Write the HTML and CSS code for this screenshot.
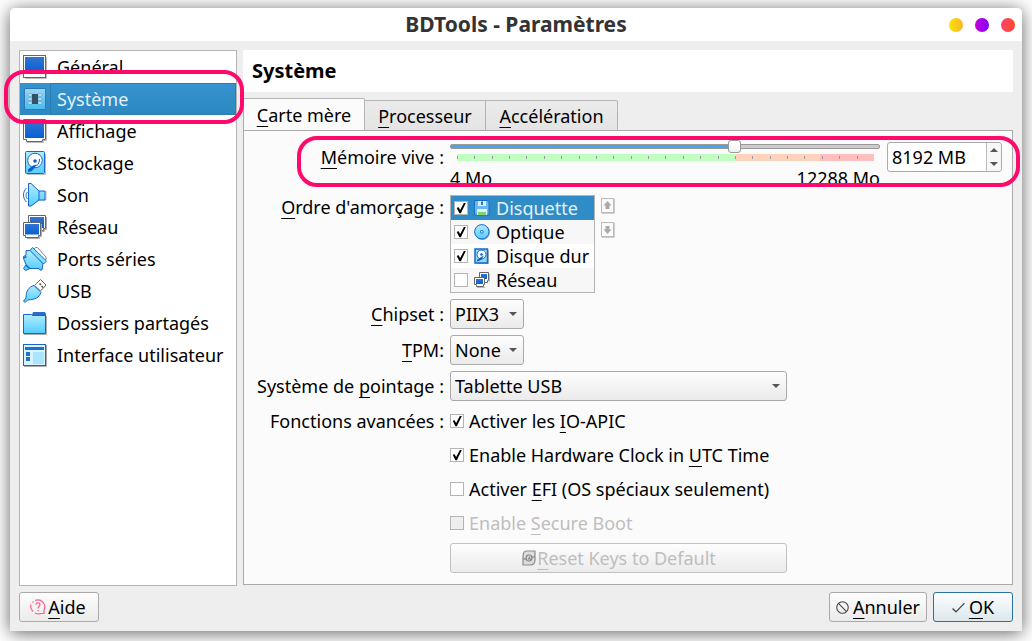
FILE: index.html
```html
<!DOCTYPE html>
<html lang="fr">
<head>
<meta charset="utf-8">
<title>BDTools - Paramètres</title>
<meta name="viewport" content="width=device-width, initial-scale=1">
<link rel="stylesheet" href="styles.css">
</head>
<body>
<svg class="defs" aria-hidden="true">
  <defs>
    <linearGradient id="blue" x1="0" y1="0" x2="0" y2="1"><stop offset="0" stop-color="#3474cf"/><stop offset="1" stop-color="#0560d6"/></linearGradient>
    <linearGradient id="sky" x1="0" y1="0" x2="0" y2="1"><stop offset="0" stop-color="#b4ecfd"/><stop offset="1" stop-color="#50ceff"/></linearGradient>
    <symbol id="i-general" viewBox="0 0 24 24">
      <path d="M2 23.5h21.500V2" fill="none" stroke="#bbb"/>
      <rect x=".5" y=".5" width="22" height="22" fill="#fff" stroke="#666"/>
      <rect x="2" y="2" width="19" height="15.500" fill="url(#blue)"/>
    </symbol>
    <symbol id="i-display" viewBox="0 0 24 24">
      <path d="M.5.5h22v20h-3v2h-16v-2h-3z" fill="#fff" stroke="#666"/>
      <path d="M4 23.500h16.500v-2h3V2" fill="none" stroke="#bbb"/>
      <rect x="2" y="2" width="19" height="17" fill="url(#blue)"/>
    </symbol>
    <symbol id="i-system" viewBox="0 0 24 24">
      <rect x="1" y="1" width="22" height="22" rx="1" fill="#2b79ba"/>
      <rect x="2" y="2" width="20" height="20" fill="url(#sky)" opacity=".8"/>
      <path d="M5 7h4v2H5zM5 11h4v2H5zM5 15h4v2H5zM15 7h4v2h-4zM15 11h4v2h-4zM15 15h4v2h-4z" fill="#e5f4fb" stroke="#579ac3" stroke-width=".6"/>
      <rect x="9" y="7" width="6" height="10" fill="#345168"/>
    </symbol>
    <symbol id="i-disk" viewBox="0 0 24 24">
      <path d="M4 23.500h18.500V3" fill="none" stroke="#bbb"/>
      <rect x="2.500" y=".5" width="19" height="22" rx="1" fill="url(#sky)" stroke="#1767c8"/>
      <circle cx="12" cy="9.500" r="7.300" fill="#fff" stroke="#1767c8"/>
      <circle cx="12" cy="10" r="1.800" fill="#0c5dcc"/>
      <path d="M16.500 8c0 3-1 5-3 7" fill="none" stroke="#0c5dcc"/>
      <path d="M14 13.500l-5 6.500-4 1v-2.500l5-4z" fill="#0c5dcc"/>
    </symbol>
    <symbol id="i-disk-small" viewBox="0 0 16 16">
      <path d="M3 15.500h11.500V2" fill="none" stroke="#bbb"/>
      <rect x="1" y="1" width="12.500" height="14" fill="#8bdcff" stroke="#1767c8" stroke-width="1.500"/>
      <circle cx="7.500" cy="6.500" r="4.500" fill="#fff" stroke="#1767c8"/>
      <circle cx="7.500" cy="6.500" r="1.300" fill="#0c5dcc"/>
      <path d="M10 7.500L7 12l-4 1.500V12l4-3z" fill="#0c5dcc"/>
    </symbol>
    <symbol id="i-sound" viewBox="0 0 24 24">
      <path d="M7 23.500l9.500-6.500h6.500V8" fill="none" stroke="#bbb"/>
      <path d="M5.500.5h2.500l8 7.500h6v9h-6l-8 6H5.500z" fill="url(#sky)" stroke="#1767c8"/>
      <path d="M16 8v9M3.500 5c-4 4-4 10 0 14M4.500 9c-2 2-2 5 0 7" fill="none" stroke="#1767c8"/>
    </symbol>
    <symbol id="i-network" viewBox="0 0 24 24">
      <path d="M5.500.5h17v13h-2v2h-13v-2h-2z" fill="#fff" stroke="#666"/>
      <path d="M7 2h14v11H7z" fill="url(#blue)"/>
      <path d="M19 16.500h2.500v-2h2V2M4 23.500h12.500v-2h2V9" fill="none" stroke="#aaa"/>
      <path d="M.5 7.500h17v13h-2v2h-13v-2h-2z" fill="#fff" stroke="#666"/>
      <path d="M2 9h14v10.500H2z" fill="url(#blue)"/>
    </symbol>
    <symbol id="i-network-small" viewBox="0 0 16 16">
      <path d="M5.500.5h9v8h-1v2h-7v-2h-1z" fill="#fff" stroke="#666"/>
      <path d="M7 2h6v5H7z" fill="url(#blue)"/>
      <path d="M15.500 2v8" stroke="#bbb"/>
      <path d="M.5 5.500h10v7h-1v2h-7v-2h-2z" fill="#fff" stroke="#666"/>
      <path d="M2 7h7v5H2z" fill="url(#blue)"/>
      <path d="M3 15.500h8" stroke="#bbb"/>
    </symbol>
    <symbol id="i-serial" viewBox="0 0 24 24">
      <path d="M10.500 3l2-2.500h2L23 10v3l-2 1" fill="#fff" stroke="#888"/>
      <path d="M3 3.500h5l12 13-1 6.500h-2l-1-1.500H7l-4.500 2L.5 21.500l2.500-4-2.500-6V9.500L3 8z" fill="url(#sky)" stroke="#1767c8"/>
      <path d="M7 3.500L9.500.5l14 13.500-3 3z" fill="#8adfff" stroke="#1767c8"/>
      <path d="M3 18l3.500 3.500M.5 11l3-1.500" fill="none" stroke="#1767c8" stroke-width="1.500"/>
    </symbol>
    <symbol id="i-usb" viewBox="0 0 24 24">
      <path d="M11.500 6.500L17.500.5l5.500 5.500-5.500 6z" fill="#fff" stroke="#666"/>
      <path d="M16.500 4.500l1.500 1.500M18.500 7l1.500 1.500" stroke="#555" stroke-width="1.500"/>
      <path d="M11 6.500l7 7c-2 5-5 7-13.500 7.500L2 23.500.5 22 3 19C3 12 5.500 8 11 6.500z" fill="url(#sky)" stroke="#1767c8"/>
    </symbol>
    <symbol id="i-folder" viewBox="0 0 24 24">
      <path d="M9 4l1-3h12l1 2v3H9z" fill="#286fcb"/>
      <path d="M1 23.500h22.500V5" fill="none" stroke="#aaa"/>
      <path d="M.5 3.500h8l1 1h13v18H.5z" fill="url(#sky)" stroke="#1767c8"/>
    </symbol>
    <symbol id="i-ui" viewBox="0 0 24 24">
      <path d="M1 23.500h22.500V2" fill="none" stroke="#aaa"/>
      <rect x=".5" y="1.500" width="22" height="21" fill="#d8f5ff" stroke="#1767c8"/>
      <path d="M2 4h19v3H2zM3 9h4v4H3zM3 14h4v4H3z" fill="#246fcb"/>
      <rect x="10" y="9" width="11" height="12" fill="#a9e5ff"/>
    </symbol>
    <symbol id="i-floppy" viewBox="0 0 16 16">
      <path d="M.5.500h13l1.500 2v12.500H.5z" fill="#68b9f4" stroke="#176cca"/>
      <path d="M4 1h8v5H4z" fill="#dcecf8"/><path d="M7 1.500h2V5H7z" fill="#2979c4"/>
      <path d="M3 9h10v6H3z" fill="#e7f3fa"/><path d="M4 12h8v3H4z" fill="#79d672"/>
    </symbol>
    <symbol id="i-optical" viewBox="0 0 16 16">
      <circle cx="8.500" cy="8.500" r="7.500" fill="#aaa"/>
      <circle cx="7.800" cy="7.800" r="7.200" fill="url(#sky)" stroke="#1767c8"/>
      <circle cx="7.800" cy="7.800" r="1.400" fill="#e3f7ff" stroke="#1767c8"/>
    </symbol>
    <symbol id="i-up" viewBox="0 0 14 16">
      <path d="M1 15.500h12.500V1" fill="none" stroke="#ccc"/>
      <rect x=".5" y=".5" width="12" height="14" fill="#fafafa" stroke="#bbb"/>
      <path d="M6.500 3l4 4.500H8.500V11h-4V7.500h-2z" fill="#aaa"/>
    </symbol>
    <symbol id="i-down" viewBox="0 0 14 16">
      <path d="M1 15.500h12.500V1" fill="none" stroke="#ccc"/>
      <rect x=".5" y=".5" width="12" height="14" fill="#fafafa" stroke="#bbb"/>
      <path d="M6.500 12l4-4.500H8.500V4h-4v3.500h-2z" fill="#aaa"/>
    </symbol>
    <symbol id="i-reset" viewBox="0 0 16 16">
      <path d="M5 1h9v9c0 3-2 5-5 5H2V7c0-4 1-6 3-6z" fill="#dcdcdc" stroke="#8c8c8c" stroke-width="1.200"/>
      <path d="M2 9h4M10 7h4M5 8.500c0-4 4.500-4.500 6-2M11 7.500c0 4-4.500 4.500-6 2M9 6.500L7.500 9H10" fill="none" stroke="#808080" stroke-width="1.100"/>
    </symbol>
    <symbol id="i-help" viewBox="0 0 16 16">
      <path d="M5 1.500A7 7 0 0 1 14 11v3.500h-3A7 7 0 0 1 5 14M3 12.500A7 7 0 0 1 1 5.500M2.500 3.500l1-1" fill="none" stroke="#ff5a86" stroke-width="1.200"/>
      <path d="M6 5.800c0-2.800 4-2.600 4 0C10 7.600 8 7.500 8 9.500M8 11v1.200" fill="none" stroke="#ff5a86" stroke-width="1.200"/>
    </symbol>
    <symbol id="i-cancel" viewBox="0 0 12 12">
      <circle cx="6" cy="6" r="5.300" fill="none" stroke="#444"/><path d="M2.300 2.300l7.400 7.400" stroke="#444"/>
    </symbol>
    <symbol id="i-ok" viewBox="0 0 12 12"><path d="M.5 7l3.200 3L11.500 2" fill="none" stroke="#444" stroke-width="1.200"/></symbol>
  </defs>
</svg>
<main class="window">
  <header class="titlebar">
    <h1>BDTools - Paramètres</h1>
    <div class="lights">
      <button class="light yellow" aria-label="Réduire"></button>
      <button class="light purple" aria-label="Agrandir"></button>
      <button class="light red" aria-label="Fermer"></button>
    </div>
  </header>
  <div class="content">
    <nav class="sidebar">
      <a href="#"><svg><use href="#i-general"/></svg><span>Général</span></a>
      <a href="#" class="selected" aria-current="page"><svg><use href="#i-system"/></svg><span>Système</span></a>
      <a href="#"><svg><use href="#i-display"/></svg><span>Affichage</span></a>
      <a href="#"><svg><use href="#i-disk"/></svg><span>Stockage</span></a>
      <a href="#"><svg><use href="#i-sound"/></svg><span>Son</span></a>
      <a href="#"><svg><use href="#i-network"/></svg><span>Réseau</span></a>
      <a href="#"><svg><use href="#i-serial"/></svg><span>Ports séries</span></a>
      <a href="#"><svg><use href="#i-usb"/></svg><span>USB</span></a>
      <a href="#"><svg><use href="#i-folder"/></svg><span>Dossiers partagés</span></a>
      <a href="#"><svg><use href="#i-ui"/></svg><span>Interface utilisateur</span></a>
    </nav>
    <section class="page">
      <h2>Système</h2>
      <div class="tabs" role="tablist">
        <button class="tab active" role="tab" aria-selected="true"><u>C</u>arte mère</button>
        <button class="tab" role="tab"><u>P</u>rocesseur</button>
        <button class="tab" role="tab"><u>A</u>ccélération</button>
      </div>
      <form class="panel">
        <div class="row memory">
          <label class="name" for="ram"><u>M</u>émoire vive :</label>
          <div class="ram">
            <div class="scale">
              <input type="range" id="ram" min="4" max="12288" value="8192">
              <div class="ticks"></div>
              <div class="limits"><span>4 Mo</span><span>12288 Mo</span></div>
            </div>
            <div class="spin">
              <input type="text" value="8192 MB" aria-label="Mémoire vive en MB">
              <div class="steps">
                <button type="button" class="step plus" aria-label="Augmenter"></button>
                <button type="button" class="step minus" aria-label="Diminuer"></button>
              </div>
            </div>
          </div>
        </div>
        <div class="row boot">
          <span class="name" id="boot"><u>O</u>rdre d'amorçage :</span>
          <div class="order">
            <div class="devices" role="group" aria-labelledby="boot">
              <label class="current"><input type="checkbox" checked><svg><use href="#i-floppy"/></svg>Disquette</label>
              <label><input type="checkbox" checked><svg><use href="#i-optical"/></svg>Optique</label>
              <label><input type="checkbox" checked><svg><use href="#i-disk-small"/></svg>Disque dur</label>
              <label><input type="checkbox"><svg><use href="#i-network-small"/></svg>Réseau</label>
            </div>
            <div class="movers">
              <button type="button" aria-label="Monter" disabled><svg><use href="#i-up"/></svg></button>
              <button type="button" aria-label="Descendre" disabled><svg><use href="#i-down"/></svg></button>
            </div>
          </div>
        </div>
        <div class="row">
          <label class="name" for="chipset"><u>C</u>hipset :</label>
          <div class="combo"><select id="chipset"><option>PIIX3</option><option>ICH9</option></select></div>
        </div>
        <div class="row">
          <label class="name" for="tpm"><u>T</u>PM:</label>
          <div class="combo"><select id="tpm"><option>None</option><option>1.2</option><option>2.0</option></select></div>
        </div>
        <div class="row pointing">
          <label class="name" for="pointing">Système de <u>p</u>ointage :</label>
          <div class="combo wide"><select id="pointing"><option>Tablette USB</option></select></div>
        </div>
        <div class="row features">
          <span class="name">Fonctions avancées :</span>
          <div class="checks">
            <label><input type="checkbox" checked><span>Activer les <u>I</u>O-APIC</span></label>
            <label><input type="checkbox" checked><span>Enable Hardware Clock in <u>U</u>TC Time</span></label>
            <label><input type="checkbox"><span>Activer <u>E</u>FI (OS spéciaux seulement)</span></label>
            <label class="off"><input type="checkbox" disabled><span>Enable <u>S</u>ecure Boot</span></label>
            <button type="button" class="button reset" disabled><svg><use href="#i-reset"/></svg><span><u>R</u>eset Keys to Default</span></button>
          </div>
        </div>
      </form>
    </section>
  </div>
  <footer class="actions">
    <button class="button help"><svg><use href="#i-help"/></svg><span><u>A</u>ide</span></button>
    <button class="button cancel"><svg><use href="#i-cancel"/></svg><span><u>A</u>nnuler</span></button>
    <button class="button ok"><svg><use href="#i-ok"/></svg><span><u>O</u>K</span></button>
  </footer>
</main>
</body>
</html>
```

FILE: styles.css
```css
* { box-sizing: border-box; }

body {
  margin: 0;
  padding: 8px 10px 10px;
  min-height: 100vh;
  display: flex;
  background: #fff;
  color: #000;
  font: 18px/24px "Noto Sans", "Open Sans", sans-serif;
}

button, input, select { font: inherit; color: inherit; margin: 0; }
button { cursor: pointer; }
u { text-decoration: underline 1px; text-underline-offset: 4px; text-decoration-skip-ink: none; }
.defs { position: absolute; width: 0; height: 0; }

.window {
  flex: 1;
  min-width: 0;
  display: flex;
  flex-direction: column;
  background: #eee;
  border-radius: 5px 5px 0 0;
  box-shadow: 0 2px 18px rgba(0, 0, 0, .62);
}

.titlebar {
  height: 33px;
  display: grid;
  grid-template-columns: 1fr auto 1fr;
  align-items: center;
  background: #fff;
  border-radius: 5px 5px 0 0;
}
.titlebar h1 { grid-column: 2; margin: 0; padding-bottom: 2px; font-size: 21px; color: #333; }
.lights { display: flex; justify-content: flex-end; gap: 12px; padding-right: 7px; }
.light { width: 14px; height: 14px; padding: 0; border: 0; border-radius: 50%; }
.yellow { background: linear-gradient(90deg, #f6e600, #ffb22e); }
.purple { background: linear-gradient(90deg, #cc00d8, #7d00ff); }
.red { background: linear-gradient(90deg, #ff416c, #ff4b2b); }

.content { flex: 1; display: flex; gap: 6px; padding: 9px 9px 0; }

.sidebar { width: 218px; flex: none; border: 1px solid #b4b4b4; background: #fff; }
.sidebar a {
  position: relative;
  display: flex;
  align-items: center;
  gap: 10px;
  height: 32px;
  padding-left: 3px;
  color: #000;
  text-decoration: none;
  white-space: nowrap;
}
.sidebar svg { width: 24px; height: 24px; flex: none; }
.sidebar .selected { background: linear-gradient(#3593cf, #2d88c1); color: #e4f1f9; z-index: 1; }
.sidebar .selected span {
  flex: 1;
  align-self: stretch;
  display: flex;
  align-items: center;
  margin-left: -7px;
  padding-left: 6px;
  border: 1px solid #2b7db4;
}
.sidebar .selected::after {
  content: "";
  position: absolute;
  inset: -13px -8px -9px -16px;
  border: 4px solid #ff0a6c;
  border-radius: 20px;
  pointer-events: none;
}

.page { flex: 1; min-width: 0; display: flex; flex-direction: column; padding-bottom: 1px; }
.page h2 { margin: 0; padding: 9px; height: 42px; background: #fff; font-size: 20px; line-height: 24px; }

.tabs { display: flex; align-items: flex-end; margin: 6px 0 -1px; }
.tab {
  height: 31px;
  width: 121px;
  padding: 0;
  border: 1px solid #b4b4b4;
  border-left: 0;
  background: linear-gradient(#ebebeb, #e4e4e4);
  white-space: nowrap;
}
.tab.active { height: 33px; width: 122px; border-left: 1px solid #aaa; border-bottom: 0; border-radius: 2px 2px 0 0; background: #fbfbfb; }
.tab:last-child { width: 132px; border-radius: 0 2px 0 0; }

.panel { flex: 1; padding: 6px 10px 10px 6px; border: 1px solid #aaa; background: #fbfbfb; }
.row { display: grid; grid-template-columns: 194px 1fr; gap: 6px; margin-bottom: 6px; }
.name { text-align: right; line-height: 30px; white-space: nowrap; }

.memory { position: relative; height: 49px; margin-bottom: 9px; }
.memory .name { padding-top: 5px; }
.memory::after {
  content: "";
  position: absolute;
  inset: -1px -18px -1px 47px;
  border: 4px solid #ff0a6c;
  border-radius: 20px;
  pointer-events: none;
}
.ram { display: flex; align-items: flex-start; gap: 7px; padding-top: 2px; }
.scale { flex: 1; min-width: 0; }
.scale input {
  appearance: none;
  display: block;
  width: 100%;
  height: 15px;
  background: none;
}
.scale input::-webkit-slider-runnable-track {
  height: 5px;
  border: 1px solid #999;
  border-radius: 2px;
  background:
    linear-gradient(#1d6fa5 0 1px, #46a7e8 1px 4px, #1d6fa5 4px) border-box 0 0 / 66% 100% no-repeat,
    #ccc;
}
.scale input::-webkit-slider-thumb {
  appearance: none;
  width: 13px;
  height: 13px;
  margin-top: -5px;
  border: 1px solid #999;
  border-radius: 3px;
  background: linear-gradient(#fff, #f1f1f1);
}
.ticks {
  height: 7px;
  margin: 0 6px 0 7px;
  background:
    repeating-linear-gradient(90deg, #9a9a9a 0 1px, transparent 1px calc(100% / 24)) 0 2px / 100% 3px no-repeat,
    linear-gradient(90deg, #c1ffc1 67%, #ffd3bb 67% 87%, #ffbfbf 87%);
}
.limits { display: flex; justify-content: space-between; padding-top: 5px; }

.spin { display: flex; width: 115px; height: 30px; margin-top: 3px; border: 1px solid #aaa; border-radius: 3px; background: #fff; }
.spin input { flex: 1; min-width: 0; padding: 0 4px; border: 0; background: none; outline: 0; }
.steps { width: 15px; display: flex; flex-direction: column; border-left: 1px solid #bbb; border-radius: 0 3px 3px 0; background: #f7f7f7; }
.step { flex: 1; padding: 0; border: 0; background: none; display: grid; place-items: center; }
.step::before { content: ""; border: 4px solid transparent; border-top-width: 0; border-bottom: 4px solid #555; }
.minus::before { border-bottom-width: 0; border-top: 4px solid #555; }

input[type="checkbox"] {
  appearance: none;
  flex: none;
  width: 14px;
  height: 14px;
  border: 1px solid #b4b4b4;
  background: #fff;
}
input[type="checkbox"]:checked::before {
  content: "";
  display: block;
  width: 12px;
  height: 12px;
  background: #000;
  clip-path: polygon(15% 50%, 28% 42%, 43% 66%, 74% 8%, 90% 8%, 49% 94%, 37% 94%);
}
input[type="checkbox"]:disabled { background: #eee; }

.boot .name { line-height: 24px; }
.order { display: flex; gap: 6px; }
.devices { width: 145px; border: 1px solid #b4b4b4; background: #fff; }
.devices label { display: flex; align-items: center; height: 24px; padding-left: 3px; white-space: nowrap; }
.devices label:nth-child(even) { background: #f7f7f7; }
.devices .current { background: #308cc6; color: #e4f1f9; }
.devices svg { width: 16px; height: 16px; margin: 0 6px; }
.movers { display: flex; flex-direction: column; gap: 8px; padding-top: 3px; }
.movers button { display: flex; padding: 0; border: 0; background: none; }
.movers svg { width: 14px; height: 16px; }

.combo { position: relative; width: 74px; height: 30px; }
.combo.wide { width: 337px; }
.combo select {
  appearance: none;
  width: 100%;
  height: 100%;
  padding: 0 4px;
  border: 1px solid #aaa;
  border-radius: 3px;
  background: linear-gradient(#fdfdfd, #ebebeb);
}
.combo::after {
  content: "";
  position: absolute;
  right: 7px;
  top: 13px;
  border: 4px solid transparent;
  border-top-color: #555;
  border-bottom-width: 0;
  pointer-events: none;
}

.pointing { margin-bottom: 5px; }
.features { margin-bottom: 0; }
.checks { display: flex; flex-direction: column; }
.checks label { display: flex; align-items: center; gap: 5px; height: 34px; white-space: nowrap; }
.checks label:first-child { height: 30px; margin-bottom: 2px; }
.off { color: #bebebe; }

.button {
  display: flex;
  align-items: center;
  justify-content: center;
  height: 30px;
  padding: 0;
  border: 1px solid #aaa;
  border-radius: 3px;
  background: linear-gradient(#fdfdfd, #ebebeb);
}
.button svg { flex: none; width: 16px; height: 16px; margin-right: 2px; }
.reset { width: 337px; margin-top: 3px; border-color: #c2c2c2; color: #bebebe; }
.reset svg { margin-right: 0; }

.actions { display: flex; gap: 6px; padding: 6px 9px 9px; }
.help { width: 80px; margin-right: auto; padding-right: 2px; }
.cancel { width: 98px; }
.ok { width: 80px; border-color: #2772a3; background: linear-gradient(#fcfdfe, #dde7ec); }
.cancel svg, .ok svg { width: 13px; height: 13px; margin-right: 4px; }
```
